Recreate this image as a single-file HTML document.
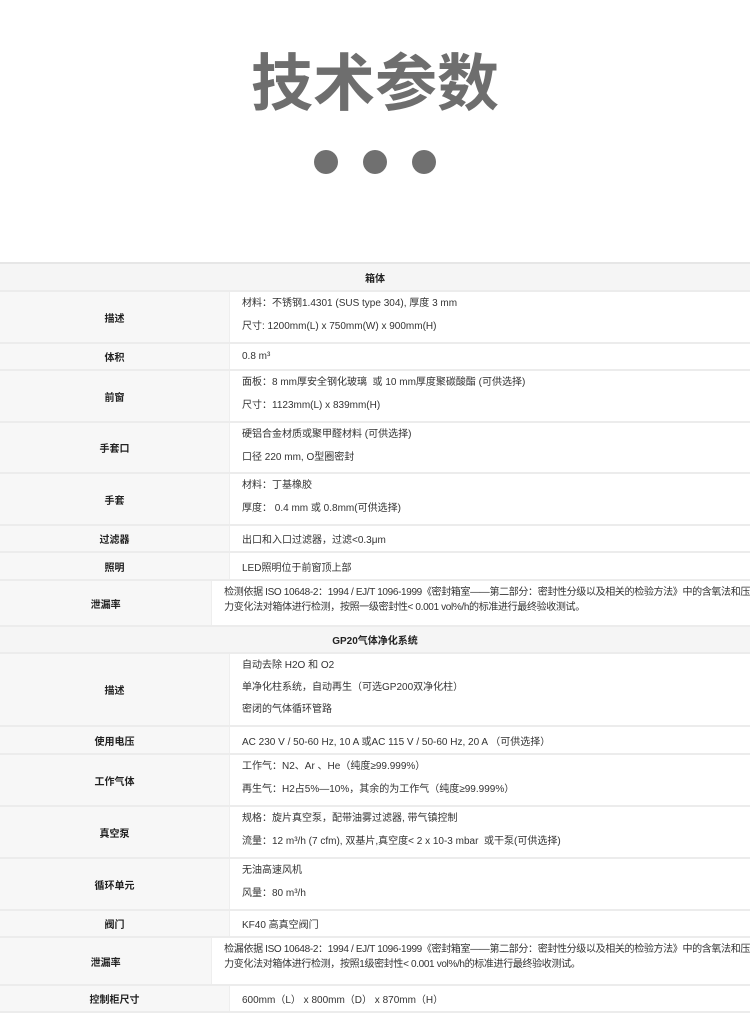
<!DOCTYPE html>
<html><head><meta charset="utf-8"><style>
*{margin:0;padding:0;box-sizing:border-box}
body{width:750px;height:1012px;background:#fff;font-family:"Liberation Sans","Noto Sans CJK SC",sans-serif;color:#333;overflow:hidden;position:relative}
.title{position:absolute;left:0;width:750px;top:45px;text-align:center;font-size:62px;font-weight:bold;color:#6e6e6e;line-height:80px}
.dot{position:absolute;top:150px;width:24px;height:24px;border-radius:50%;background:#707070}
.tbl{position:absolute;top:262px;left:0;width:750px;border-top:2px solid #e6e6e6}
.r{display:flex;border-bottom:2px solid #ececec;font-size:10px}
.l{width:230px;background:#f7f7f7;display:flex;align-items:center;justify-content:center;font-weight:bold;color:#222;border-right:1px solid #eee}
.v{flex:1;padding-left:12px;background:#fff}
.c{display:flex;align-items:center}
.m{line-height:23px}
.s{line-height:15px;padding-top:4px;padding-right:0;letter-spacing:-0.35px;white-space:nowrap}
.h{background:#f5f5f5;justify-content:center;align-items:center;display:flex;font-weight:bold;color:#222}
</style></head><body>
<div class="title">技术参数</div>
<div class="dot" style="left:314px"></div>
<div class="dot" style="left:363px"></div>
<div class="dot" style="left:412px"></div>
<div class="tbl">
<div class="r h" style="height:28px">箱体</div>
<div class="r" style="height:52px"><div class="l">描述</div><div class="v m">材料：不锈钢1.4301 (SUS type 304), 厚度 3 mm<br>尺寸: 1200mm(L) x 750mm(W) x 900mm(H)</div></div>
<div class="r" style="height:27px"><div class="l">体积</div><div class="v c">0.8 m³</div></div>
<div class="r" style="height:52px"><div class="l">前窗</div><div class="v m">面板：8 mm厚安全钢化玻璃&nbsp; 或 10 mm厚度聚碳酸酯 (可供选择)<br>尺寸：1123mm(L) x 839mm(H)</div></div>
<div class="r" style="height:51px"><div class="l">手套口</div><div class="v m">硬铝合金材质或聚甲醛材料 (可供选择)<br>口径 220 mm, O型圈密封</div></div>
<div class="r" style="height:52px"><div class="l">手套</div><div class="v m">材料：丁基橡胶<br>厚度：&nbsp;0.4 mm 或 0.8mm(可供选择)</div></div>
<div class="r" style="height:27px"><div class="l">过滤器</div><div class="v c">出口和入口过滤器，过滤&lt;0.3μm</div></div>
<div class="r" style="height:28px"><div class="l">照明</div><div class="v c">LED照明位于前窗顶上部</div></div>
<div class="r" style="height:46px"><div class="l">泄漏率</div><div class="v s">检测依据 ISO 10648-2：1994 / EJ/T 1096-1999《密封箱室——第二部分：密封性分级以及相关的检验方法》中的含氧法和压<br>力变化法对箱体进行检测，按照一级密封性&lt; 0.001 vol%/h的标准进行最终验收测试。</div></div>
<div class="r h" style="height:27px">GP20气体净化系统</div>
<div class="r" style="height:73px"><div class="l">描述</div><div class="v" style="line-height:22px;padding-top:1px">自动去除 H2O 和 O2<br>单净化柱系统，自动再生（可选GP200双净化柱）<br>密闭的气体循环管路</div></div>
<div class="r" style="height:28px"><div class="l">使用电压</div><div class="v c">AC 230 V / 50-60 Hz, 10 A 或AC 115 V / 50-60 Hz, 20 A （可供选择）</div></div>
<div class="r" style="height:52px"><div class="l">工作气体</div><div class="v m">工作气：N2、Ar 、He（纯度≥99.999%）<br>再生气：H2占5%—10%，其余的为工作气（纯度≥99.999%）</div></div>
<div class="r" style="height:52px"><div class="l">真空泵</div><div class="v m">规格：旋片真空泵，配带油雾过滤器, 带气镇控制<br>流量：12 m³/h (7 cfm), 双基片,真空度&lt; 2 x 10-3 mbar&nbsp; 或干泵(可供选择)</div></div>
<div class="r" style="height:52px"><div class="l">循环单元</div><div class="v m">无油高速风机<br>风量：80 m³/h</div></div>
<div class="r" style="height:27px"><div class="l">阀门</div><div class="v c">KF40 高真空阀门</div></div>
<div class="r" style="height:48px"><div class="l">泄漏率</div><div class="v s">检漏依据 ISO 10648-2：1994 / EJ/T 1096-1999《密封箱室——第二部分：密封性分级以及相关的检验方法》中的含氧法和压<br>力变化法对箱体进行检测，按照1级密封性&lt; 0.001 vol%/h的标准进行最终验收测试。</div></div>
<div class="r" style="height:27px"><div class="l">控制柜尺寸</div><div class="v c">600mm（L） x 800mm（D） x 870mm（H）</div></div>
</div>
</body></html>
